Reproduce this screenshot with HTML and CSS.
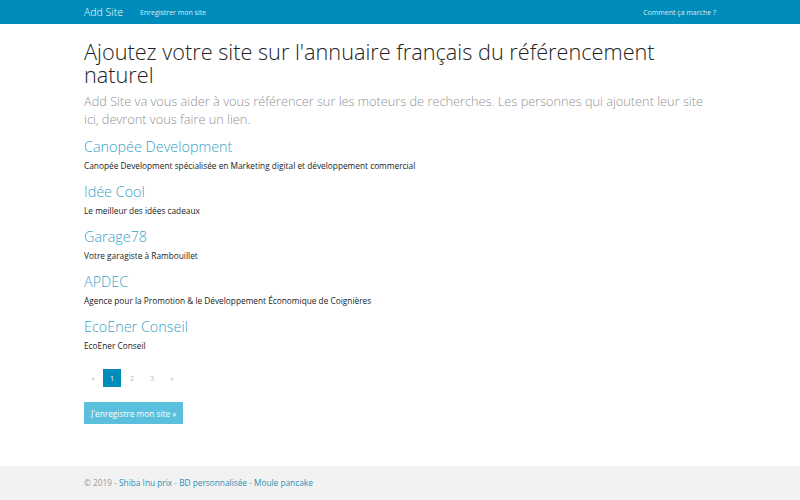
FILE: index.html
```html
<!DOCTYPE html>
<html lang="fr">
<head>
<meta charset="utf-8">
<title>Add Site</title>
<link rel="stylesheet" href="styles.css">
</head>
<body>
<nav class="navbar">
  <div class="container nav-inner">
    <div class="nav-left">
      <a class="brand" href="#">Add Site</a>
      <a class="nav-link" href="#">Enregistrer mon site</a>
    </div>
    <a class="nav-link" href="#">Comment ça marche ?</a>
  </div>
</nav>
<main class="container main">
  <h1 class="title">Ajoutez votre site sur l'annuaire français du référencement naturel</h1>
  <p class="lead">Add Site va vous aider à vous référencer sur les moteurs de recherches. Les personnes qui ajoutent leur site ici, devront vous faire un lien.</p>
  <ul class="sites">
    <li class="site"><a class="site-name" href="#">Canopée Development</a><p class="site-desc">Canopée Development spécialisée en Marketing digital et développement commercial</p></li>
    <li class="site"><a class="site-name" href="#">Idée Cool</a><p class="site-desc">Le meilleur des idées cadeaux</p></li>
    <li class="site"><a class="site-name" href="#">Garage78</a><p class="site-desc">Votre garagiste à Rambouillet</p></li>
    <li class="site"><a class="site-name" href="#">APDEC</a><p class="site-desc">Agence pour la Promotion &amp; le Développement Économique de Coignières</p></li>
    <li class="site"><a class="site-name" href="#">EcoEner Conseil</a><p class="site-desc">EcoEner Conseil</p></li>
  </ul>
  <ul class="pagination">
    <li class="first"><a href="#">«</a></li>
    <li class="active"><a href="#">1</a></li>
    <li><a href="#">2</a></li>
    <li><a href="#">3</a></li>
    <li><a href="#">»</a></li>
  </ul>
  <a class="btn-info" href="#">J'enregistre mon site »</a>
</main>
<footer class="footer">
  <div class="container footer-inner">© 2019 - <a href="#">Shiba Inu prix</a> - <a href="#">BD personnalisée</a> - <a href="#">Moule pancake</a></div>
</footer>
</body>
</html>
```
FILE: styles.css
```css
* { box-sizing: border-box; }
html, body { margin: 0; padding: 0; height: 100%; }
body {
  font-family: "Open Sans", "Liberation Sans", sans-serif;
  color: #222;
  background: #fff;
  display: flex;
  flex-direction: column;
  min-height: 500px;
}
a { text-decoration: none; }
.container {
  width: 632px;
  margin: 0 auto;
}
.navbar {
  background: #008cba;
  height: 24px;
}
.nav-inner {
  height: 24px;
  display: flex;
  align-items: center;
  justify-content: space-between;
}
.nav-left {
  display: flex;
  align-items: center;
}
.brand {
  color: #fff;
  font-size: 10.5px;
  font-weight: 300;
  margin-right: 17px;
}
.nav-link {
  color: #d8eef6;
  font-size: 7px;
}
.main {
  flex: 1;
  padding-top: 16px;
}
.title {
  font-weight: 300;
  font-size: 21.7px;
  line-height: 23px;
  margin: 0 0 6px;
  color: #222;
}
.lead {
  font-weight: 300;
  font-size: 12.75px;
  line-height: 18px;
  color: #929292;
  margin: 0 0 7px;
}
.sites {
  list-style: none;
  margin: 0;
  padding: 0;
}
.site {
  height: 45px;
}
.site-name {
  display: block;
  color: #3a9fc6;
  font-weight: 300;
  font-size: 14.4px;
  line-height: 24px;
}
.site-desc {
  margin: 0;
  font-size: 8.3px;
  line-height: 14px;
  color: #222;
}
.pagination {
  list-style: none;
  margin: 9px 0 0;
  padding: 0;
  display: flex;
  height: 18px;
}
.pagination li a {
  display: flex;
  align-items: center;
  justify-content: center;
  width: 20px;
  height: 18px;
  font-size: 7px;
  color: #bbb;
}
.pagination li.first a { width: 18px; }
.pagination li.active a {
  background: #008cba;
  color: #fff;
  width: 18px;
  margin: 0 1px;
}
.btn-info {
  display: inline-flex;
  align-items: center;
  margin-top: 15px;
  height: 22px;
  padding: 0 7px;
  background: #5bc0de;
  color: #fff;
  font-size: 8.3px;
}
.footer {
  background: #f2f2f2;
  height: 34px;
}
.footer-inner {
  line-height: 34px;
  font-size: 8.3px;
  color: #999;
}
.footer-inner a { color: #2d8fb3; }
```
